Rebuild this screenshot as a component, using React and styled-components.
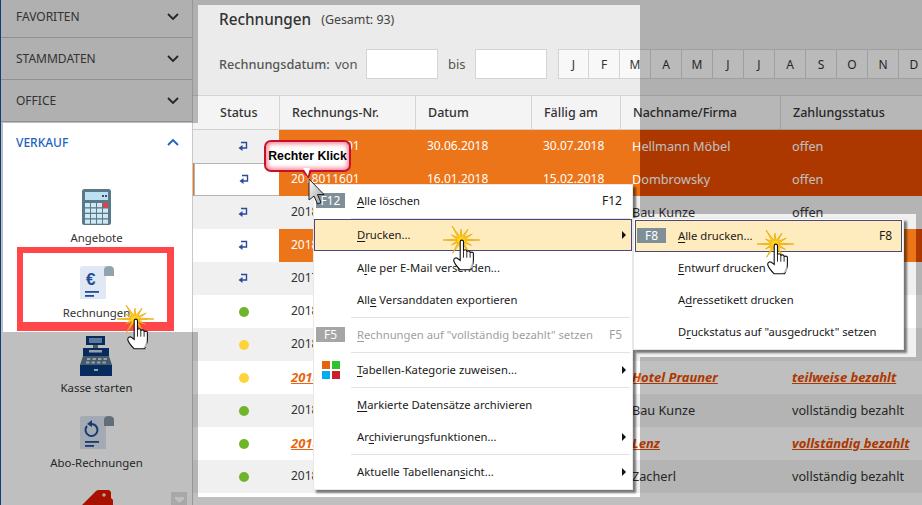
import React from "react";
import styled, { createGlobalStyle } from "styled-components";

const GlobalStyle = createGlobalStyle`
  html, body { margin: 0; padding: 0; background: #ebebeb; }
  body { font-family: "Noto Sans", sans-serif; font-size: 12px; color: #333; }
`;

const Page = styled.div`
  position: relative;
  width: 922px;
  height: 505px;
  overflow: hidden;
  display: grid;
  grid-template-columns: 193px 1fr;
`;

/* the grey veil with the lit areas cut out of it */
const Dim = styled.div`
  position: absolute;
  inset: 0;
  z-index: 10;
  background: rgba(0, 0, 0, 0.25);
  clip-path: path(evenodd, "M0 0H922V505H0Z M198 5H640V214H916V357H640V497H198V332H3V123H198Z");
`;

const Sidebar = styled.aside`
  position: relative;
  background: #fff;
  border-left: 1px solid #0f55a8;
  border-right: 1px solid #c8c8c8;
  overflow: hidden;
`;

const Collapsed = styled.div`
  margin-top: -4px;
  background: #ebebeb;
`;

const SectionHead = styled.div`
  height: ${(p) => (p.$open ? "40px" : "41px")};
  display: flex;
  align-items: center;
  justify-content: space-between;
  padding: 0 13px 0 15px;
  border-bottom: ${(p) => (p.$open ? "none" : "1px solid #c0c0c0")};
  font-size: 12px;
  font-weight: ${(p) => (p.$open ? 500 : 400)};
  color: ${(p) => (p.$open ? "#1f5fbf" : "#444")};
`;

const ItemList = styled.div`
  padding-top: 24px;
  display: flex;
  flex-direction: column;
`;

const Item = styled.div`
  height: 75px;
  display: flex;
  flex-direction: column;
  align-items: center;
`;

const ItemIcon = styled.div`
  height: 40px;
  display: flex;
  align-items: flex-end;
`;

const ItemLabel = styled.div`
  margin-top: 3px;
  line-height: 18px;
  font-size: 11.4px;
  color: #333;
`;

const RedFrame = styled.div`
  position: absolute;
  left: 16px;
  top: 247px;
  width: 144px;
  height: 69px;
  border-style: solid;
  border-color: #ff4649;
  border-width: 6px 7px 9px 6px;
`;

const ChatBadge = styled.div`
  position: absolute;
  left: 170px;
  top: 492px;
  width: 16px;
  height: 16px;
  background: #e0e0e0;
  display: flex;
  justify-content: center;
  padding-top: 5px;
  box-sizing: border-box;
`;

const Main = styled.main`
  min-width: 0;
  background: #ebebeb;
`;

const Head = styled.div`
  height: 96px;
  padding-left: 26px;
  box-sizing: border-box;
  border-bottom: 1px solid #d4d4d4;
  display: flex;
  flex-direction: column;
`;

const TitleRow = styled.div`
  margin-top: 7px;
  height: 24px;
  display: flex;
  align-items: center;
  gap: 10px;
`;

const Title = styled.h1`
  margin: 0;
  font-size: 15.3px;
  font-weight: 500;
  color: #333;
`;

const Count = styled.span`
  font-size: 12.4px;
  color: #444;
`;

const FilterRow = styled.div`
  margin-top: 18px;
  display: flex;
  align-items: center;
  font-size: 12px;
  color: #555;
  & > * { flex: none; }
`;

const FilterLabel = styled.span`
  font-size: 12.7px;
  font-weight: 500;
  width: 116px;
`;

const FilterWord = styled.span`
  width: ${(p) => p.$w}px;
  padding-left: ${(p) => p.$pad || 0}px;
  font-size: 13px;
`;

const DateInput = styled.div`
  width: 70px;
  height: 28px;
  background: #fff;
  border: 1px solid #d4d4d4;
`;

const Months = styled.div`
  margin-left: 11px;
  display: flex;
`;

const Month = styled.div`
  flex: none;
  width: 31px;
  height: 30px;
  box-sizing: border-box;
  background: #f8f8f8;
  border: 1px solid #d4d4d4;
  border-left-width: ${(p) => (p.$first ? "1px" : "0")};
  display: flex;
  align-items: center;
  justify-content: center;
  font-size: 12px;
  color: #333;
`;

const cols = "86px 136px 116px 89px 160px 1fr";

const HeadRow = styled.div`
  display: grid;
  grid-template-columns: ${cols};
  height: 34px;
  background: #f4f4f4;
  border-bottom: 1px solid #d0d0d0;
  box-sizing: border-box;
`;

const HeadCell = styled.div`
  display: flex;
  align-items: center;
  padding-left: ${(p) => (p.$first ? 27 : 12)}px;
  border-left: ${(p) => (p.$first ? "none" : "1px solid #d4d4d4")};
  font-size: 12.5px;
  font-weight: 500;
  color: #333;
`;

const Row = styled.div`
  display: grid;
  grid-template-columns: ${cols};
  height: 33px;
  background: ${(p) =>
    p.$split
      ? `linear-gradient(90deg, #ec7519 ${p.$split}px, #e64b00 ${p.$split}px)`
      : p.$alt
      ? "#f0f0f0"
      : "#fff"};
`;

const StatusCell = styled.div`
  display: flex;
  align-items: center;
  justify-content: center;
  padding-left: 15px;
  background: ${(p) => (p.$alt ? "#f0f0f0" : "#fff")};
  box-sizing: border-box;
  margin-left: ${(p) => (p.$selected ? "1px" : 0)};
  border: ${(p) => (p.$selected ? "1px solid #b4b4b4" : "none")};
  border-right: none;
`;

const Dot = styled.span`
  width: 10px;
  height: 10px;
  border-radius: 50%;
  background: ${(p) => (p.$yellow ? "#ffd33a" : "#6fb52c")};
`;

const Cell = styled.div`
  display: flex;
  align-items: center;
  padding: 0 0 2px 12px;
  font-size: ${(p) => (p.$wide ? "12.7px" : "12px")};
  white-space: nowrap;
  overflow: hidden;
  color: ${(p) => (p.$onOrange ? "#fff" : "#333")};
  ${(p) =>
    p.$em &&
    `
    font-size: 13px;
    font-weight: 700;
    font-style: italic;
    text-decoration: underline;
    color: ${p.$wide ? "#e64b00" : "#e8640f"};
  `}
`;

const Menu = styled.div`
  position: absolute;
  z-index: 20;
  left: ${(p) => p.$x}px;
  top: ${(p) => p.$y}px;
  width: ${(p) => p.$w}px;
  box-sizing: border-box;
  padding: ${(p) => (p.$sub ? "1px" : "0 0 1px")};
  background: #fff;
  border: 1px solid #e8e8e8;
  box-shadow: 3px 3px 2px rgba(0, 0, 0, 0.5);
`;

const MenuItem = styled.div`
  position: relative;
  height: 32px;
  box-sizing: border-box;
  display: flex;
  align-items: center;
  padding: 0 10px 2px 43px;
  font-size: 11.25px;
  color: ${(p) => (p.$disabled ? "#a0a0a0" : "#1a1a1a")};
  background: ${(p) => (p.$active ? "#ffecbe" : "transparent")};
  outline: ${(p) => (p.$active ? "1px solid #4a4a78" : "none")};
  outline-offset: -1px;
  margin-bottom: ${(p) => (p.$gap ? "1px" : 0)};
  u { text-underline-offset: 2px; }
`;

const Shortcut = styled.span`
  margin-left: auto;
  font-size: 12px;
`;

const KeyBadge = styled.span`
  position: absolute;
  left: 2px;
  top: 8px;
  width: 29px;
  height: 15px;
  display: flex;
  align-items: center;
  justify-content: center;
  background: ${(p) => (p.$off ? "#a6a6a6" : "#7f8f99")};
  color: #fff;
  font-size: 12px;
`;

const Sep = styled.div`
  height: 1px;
  margin: 1px 2px ${(p) => (p.$thin ? 0 : 1)}px 37px;
  background: #e2e2e2;
`;

const MenuArrow = styled.span`
  position: absolute;
  right: 6px;
  top: 12px;
  width: 0;
  height: 0;
  border-left: 4px solid #111;
  border-top: 4px solid transparent;
  border-bottom: 4px solid transparent;
`;

const Swatches = styled.span`
  position: absolute;
  left: 8px;
  top: 7px;
  display: grid;
  grid-template-columns: 8px 8px;
  grid-auto-rows: 8px;
  gap: 2px;
`;

const Swatch = styled.i`
  background: ${(p) => p.$c};
`;

const Callout = styled.div`
  position: absolute;
  z-index: 30;
  left: 264px;
  top: 140px;
  width: 87px;
  height: 32px;
  box-sizing: border-box;
  display: flex;
  align-items: center;
  justify-content: center;
  background: #fff;
  border: 2px solid #c8102e;
  border-radius: 7px;
  box-shadow: inset 0 0 4px 2px #f58a98;
  font-family: "Liberation Sans", sans-serif;
  font-size: 12.3px;
  font-weight: 700;
  color: #000;
  white-space: nowrap;
  &::after {
    content: "";
    position: absolute;
    left: 35px;
    top: 28px;
    width: 11px;
    height: 9px;
    background: #c8102e;
    clip-path: polygon(0 0, 100% 0, 70% 100%);
  }
  &::before {
    content: "";
    position: absolute;
    z-index: 1;
    left: 37px;
    top: 26px;
    width: 7px;
    height: 8px;
    background: #fff;
    clip-path: polygon(0 0, 100% 0, 70% 100%);
  }
`;

const Overlay = styled.div`
  position: absolute;
  z-index: 30;
  left: ${(p) => p.$x}px;
  top: ${(p) => p.$y}px;
  line-height: 0;
`;

const ReturnIcon = () => (
  <svg width="11" height="11" viewBox="0 0 11 11">
    <path d="M3 1.5H8.5V7H4" fill="none" stroke="#2b4a9b" strokeWidth="1.4" />
    <path d="M0.5 7L4.5 4V10Z" fill="#2b4a9b" />
  </svg>
);

const Chevron = ({ up, color = "#333" }) => (
  <svg width="12" height="8" viewBox="0 0 12 8">
    <path d={up ? "M1 7L6 2L11 7" : "M1 1L6 6L11 1"} fill="none" stroke={color} strokeWidth="1.8" />
  </svg>
);

const Calculator = () => (
  <svg width="30" height="37" viewBox="0 0 30 37">
    <rect x="0" y="0" width="29" height="36" rx="2.5" fill="#5a7887" />
    <rect x="3" y="3" width="23" height="8" fill="#bcdff2" />
    <rect x="20" y="6" width="2" height="2" fill="#33505e" />
    <rect x="23" y="6" width="2" height="2" fill="#33505e" />
    {[0, 1, 2, 3].map((r) =>
      [0, 1, 2, 3].map((c) => (
        <rect
          key={`${r}-${c}`}
          x={3 + c * 6}
          y={14 + r * 5.5}
          width="5"
          height="4.2"
          fill={r === 0 && c === 3 ? "#ef3b3f" : "#cfe8f3"}
        />
      ))
    )}
  </svg>
);

const Invoice = ({ children, paper = "#dfe8f3", tab = "#8fa3b0" }) => (
  <svg width="34" height="35" viewBox="0 0 34 35">
    <path d="M0 2.5Q0 0 2.5 0H26V33H0Z" fill={paper} />
    <path d="M24 10V4Q24 0 29 0Q34 0 34 4V10Z" fill={tab} />
    {children}
    <rect x="5" y="25" width="14" height="1.8" fill="#1f4e96" />
    <rect x="5" y="29" width="9" height="1.8" fill="#1f4e96" />
  </svg>
);

const CashRegister = () => (
  <svg width="33" height="40" viewBox="0 0 33 40">
    <rect x="6" y="0" width="19" height="9" fill="#0a3a7e" />
    <rect x="9" y="2" width="13" height="5" fill="#7ea2c8" />
    <rect x="13" y="9" width="5" height="3" fill="#5e7a8e" />
    <rect x="3" y="12" width="26" height="8" fill="#0a3a7e" />
    <rect x="9" y="14" width="13" height="2.5" fill="#cbd6e2" />
    <path d="M3 20H29L32 29H0Z" fill="#5e7a8e" />
    {[0, 1].map((r) =>
      [0, 1, 2, 3].map((c) => (
        <rect key={`${r}-${c}`} x={7 + c * 5.5 - r} y={22 + r * 3.5} width="3.4" height="2" fill="#cbd6e2" />
      ))
    )}
    <rect x="0" y="29" width="32" height="11" fill="#0a3a7e" />
    <rect x="14" y="33" width="4" height="2" fill="#cbd6e2" />
  </svg>
);

const PriceTag = () => (
  <svg width="34" height="40" viewBox="0 0 34 40">
    <path d="M2 19L16 5Q17 4 19 4H29L31 6V12L33 14V40H2Z" fill="#e01600" />
    <circle cx="24" cy="9" r="1.8" fill="#ffd8d0" />
  </svg>
);

const burst = Array.from({ length: 24 }, (_, i) => {
  const a = (i / 24) * Math.PI * 2;
  const long = [19, 12, 15, 11, 17, 11, 18, 11, 18, 12, 14, 13];
  const r = i % 2 ? 4 : long[i / 2];
  return `${(Math.cos(a) * r).toFixed(1)},${(Math.sin(a) * r * 0.9).toFixed(1)}`;
}).join(" ");

/* yellow click burst with the white hand, x/y is the burst centre */
const ClickHand = ({ x, y }) => (
  <Overlay $x={x - 20} $y={y - 18}>
    <svg width="46" height="52" viewBox="0 0 46 52">
      <g transform="translate(20 18)">
        <polygon points={burst} fill="#ffd21e" stroke="#e8a200" strokeWidth="0.7" />
      </g>
      <g transform="translate(11.5 17) scale(1.1)">
        <path
          d="M7 2.5C7 0.5 10 0.5 10 2.5V11C10 9.4 13 9.4 13 11V12C13 10.4 16 10.4 16 12V13C16 11.6 19 11.6 19 13V20C19 23 17.5 25 16.5 28H7C5 26 2 23 1.2 20C0.7 18 2.6 16.5 4.4 17.5L7 19.5Z"
          fill="#fff"
          stroke="#111"
          strokeWidth="1"
        />
        <path d="M10 11V17M13 12V17M16 13V17" stroke="#111" strokeWidth="0.8" fill="none" />
        <path d="M15 27.5C17 25 18 22 18.5 19V26Z" fill="#bbb" />
      </g>
    </svg>
  </Overlay>
);

const ArrowPointer = () => (
  <Overlay $x={308} $y={178}>
    <svg width="20" height="30" viewBox="0 0 20 30">
      <defs>
        <linearGradient id="arrowFill" x1="0" y1="0" x2="1" y2="1">
          <stop offset="0" stopColor="#fff" />
          <stop offset="1" stopColor="#999" />
        </linearGradient>
      </defs>
      <path d="M1 1V22L6 18L9.5 26L13 24.5L9.5 16.5H16Z" fill="url(#arrowFill)" stroke="#222" strokeWidth="1" />
    </svg>
  </Overlay>
);

const months = ["J", "F", "M", "A", "M", "J", "J", "A", "S", "O", "N", "D"];

const rows = [
  { state: "return", nr: "2018011701", date: "30.06.2018", due: "30.07.2018", name: "Hellmann Möbel", pay: "offen", split: 447 },
  { state: "return", nr: "2018011601", date: "16.01.2018", due: "15.02.2018", name: "Dombrowsky", pay: "offen", split: 447, selected: true },
  { state: "return", nr: "2018011501", date: "12.01.2018", due: "11.02.2018", name: "Bau Kunze", pay: "offen" },
  { state: "return", nr: "2018011401", date: "10.01.2018", due: "09.02.2018", name: "Maier", pay: "offen", split: 723 },
  { state: "return", nr: "2017121901", date: "19.12.2017", due: "18.01.2018", name: "Huber", pay: "offen" },
  { state: "green", nr: "2018121801", date: "18.12.2017", due: "17.01.2018", name: "Lenz", pay: "vollständig bezahlt" },
  { state: "yellow", nr: "2018121501", date: "15.12.2017", due: "14.01.2018", name: "Zacherl", pay: "teilweise bezahlt" },
  { state: "yellow", nr: "2018121401", date: "14.12.2017", due: "13.01.2018", name: "Hotel Prauner", pay: "teilweise bezahlt", em: true },
  { state: "green", nr: "2018121301", date: "13.12.2017", due: "12.01.2018", name: "Bau Kunze", pay: "vollständig bezahlt" },
  { state: "green", nr: "2018121201", date: "12.12.2017", due: "11.01.2018", name: "Lenz", pay: "vollständig bezahlt", em: true },
  { state: "green", nr: "2018121101", date: "11.12.2017", due: "10.01.2018", name: "Zacherl", pay: "vollständig bezahlt" },
  { state: "green" },
];

const App = () => {
  return (
    <Page>
      <GlobalStyle />
      <Sidebar>
        <Collapsed>
          {["FAVORITEN", "STAMMDATEN", "OFFICE"].map((t) => (
            <SectionHead key={t}>
              {t}
              <Chevron />
            </SectionHead>
          ))}
        </Collapsed>
        <SectionHead $open>
          VERKAUF
          <Chevron up color="#1f5fbf" />
        </SectionHead>
        <ItemList>
          <Item>
            <ItemIcon><Calculator /></ItemIcon>
            <ItemLabel>Angebote</ItemLabel>
          </Item>
          <Item>
            <ItemIcon>
              <Invoice>
                <text x="6" y="19" fontFamily="Liberation Sans, sans-serif" fontSize="17" fontWeight="700" fill="#1f4e96">€</text>
              </Invoice>
            </ItemIcon>
            <ItemLabel>Rechnungen</ItemLabel>
          </Item>
          <Item>
            <ItemIcon><CashRegister /></ItemIcon>
            <ItemLabel>Kasse starten</ItemLabel>
          </Item>
          <Item>
            <ItemIcon>
              <Invoice paper="#dbe3f0" tab="#82939f">
                <path d="M7 10A6 6 0 1 0 11 8" fill="none" stroke="#1f4e96" strokeWidth="2" />
                <path d="M12 4V11L7 8Z" fill="#1f4e96" />
              </Invoice>
            </ItemIcon>
            <ItemLabel>Abo-Rechnungen</ItemLabel>
          </Item>
          <Item>
            <ItemIcon><PriceTag /></ItemIcon>
          </Item>
        </ItemList>
        <RedFrame />
        <ChatBadge>
          <svg width="9" height="6" viewBox="0 0 9 6"><path d="M0 0H9V2L4.5 6L0 2Z" fill="#fff" /></svg>
        </ChatBadge>
      </Sidebar>

      <Main>
        <Head>
          <TitleRow>
            <Title>Rechnungen</Title>
            <Count>(Gesamt: 93)</Count>
          </TitleRow>
          <FilterRow>
            <FilterLabel>Rechnungsdatum:</FilterLabel>
            <FilterWord $w={31}>von</FilterWord>
            <DateInput />
            <FilterWord $w={27} $pad={10}>bis</FilterWord>
            <DateInput />
            <Months>
              {months.map((m, i) => (
                <Month key={i} $first={i === 0}>{m}</Month>
              ))}
            </Months>
          </FilterRow>
        </Head>
        <HeadRow>
          <HeadCell $first>Status</HeadCell>
          <HeadCell>Rechnungs-Nr.</HeadCell>
          <HeadCell>Datum</HeadCell>
          <HeadCell>Fällig am</HeadCell>
          <HeadCell>Nachname/Firma</HeadCell>
          <HeadCell>Zahlungsstatus</HeadCell>
        </HeadRow>
        {rows.map((r, i) => {
          const alt = i % 2 === 0;
          return (
            <Row key={i} $alt={alt} $split={r.split}>
              <StatusCell $alt={alt} $selected={r.selected}>
                {r.state === "return" ? <ReturnIcon /> : <Dot $yellow={r.state === "yellow"} />}
              </StatusCell>
              <Cell $onOrange={r.split} $em={r.em}>{r.nr}</Cell>
              <Cell $onOrange={r.split}>{r.date}</Cell>
              <Cell $onOrange={r.split}>{r.due}</Cell>
              <Cell $onOrange={r.split} $em={r.em} $wide>{r.name}</Cell>
              <Cell $onOrange={r.split} $em={r.em} $wide>{r.pay}</Cell>
            </Row>
          );
        })}
      </Main>

      <Dim />

      <Menu $x={313} $y={184} $w={320}>
        <MenuItem>
          <KeyBadge>F12</KeyBadge>
          <span><u>A</u>lle löschen</span>
          <Shortcut>F12</Shortcut>
        </MenuItem>
        <Sep $thin />
        <MenuItem $active $gap>
          <span><u>D</u>rucken...</span>
          <MenuArrow />
        </MenuItem>
        <MenuItem><span>A<u>l</u>le per E-Mail versenden...</span></MenuItem>
        <MenuItem><span>All<u>e</u> Versanddaten exportieren</span></MenuItem>
        <Sep />
        <MenuItem $disabled>
          <KeyBadge $off>F5</KeyBadge>
          <span><u>R</u>echnungen auf "vollständig bezahlt" setzen</span>
          <Shortcut>F5</Shortcut>
        </MenuItem>
        <Sep />
        <MenuItem>
          <Swatches>
            <Swatch $c="#e5640f" />
            <Swatch $c="#2bc42b" />
            <Swatch $c="#00aeef" />
            <Swatch $c="#c8202f" />
          </Swatches>
          <span><u>T</u>abellen-Kategorie zuweisen...</span>
          <MenuArrow />
        </MenuItem>
        <Sep />
        <MenuItem><span><u>M</u>arkierte Datensätze archivieren</span></MenuItem>
        <MenuItem>
          <span>Ar<u>c</u>hivierungsfunktionen...</span>
          <MenuArrow />
        </MenuItem>
        <Sep />
        <MenuItem>
          <span>Aktuelle Tabellenan<u>s</u>icht...</span>
          <MenuArrow />
        </MenuItem>
      </Menu>

      <Menu $x={633} $y={218} $w={271} $sub>
        <MenuItem $active>
          <KeyBadge>F8</KeyBadge>
          <span><u>A</u>lle drucken...</span>
          <Shortcut>F8</Shortcut>
        </MenuItem>
        <MenuItem><span><u>E</u>ntwurf drucken</span></MenuItem>
        <MenuItem><span>A<u>d</u>ressetikett drucken</span></MenuItem>
        <MenuItem><span>D<u>r</u>uckstatus auf "ausgedruckt" setzen</span></MenuItem>
      </Menu>

      <Callout>Rechter Klick</Callout>
      <ArrowPointer />
      <ClickHand x={135} y={319} />
      <ClickHand x={461} y={240} />
      <ClickHand x={775} y={244} />
    </Page>
  );
};

export default App;
